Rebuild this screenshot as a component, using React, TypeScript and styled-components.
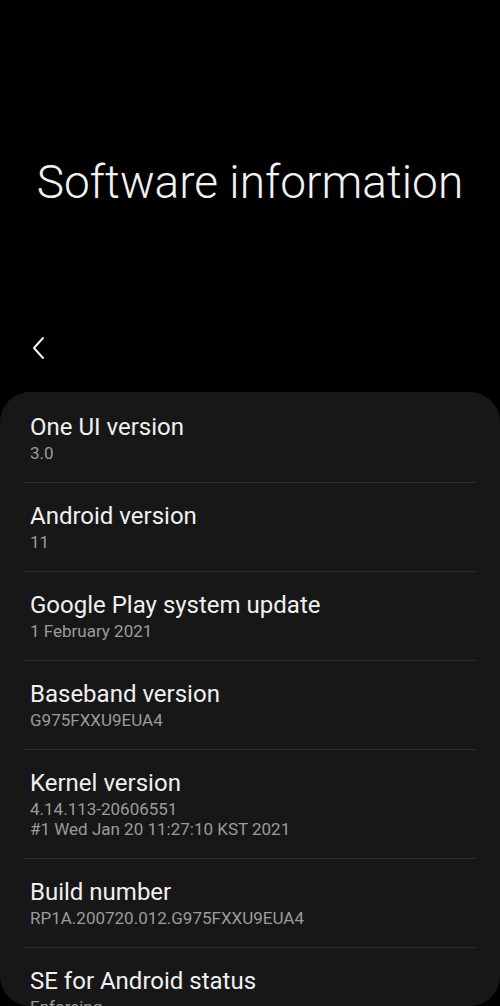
import React from "react";
import styled, { createGlobalStyle } from "styled-components";

const GlobalStyle = createGlobalStyle`
  html, body {
    margin: 0;
    padding: 0;
    background: #000;
  }
  body {
    font-family: Roboto, "Noto Sans", sans-serif;
    -webkit-font-smoothing: antialiased;
  }
`;

const Screen = styled.div`
  width: 500px;
  height: 1006px;
  background: #000;
  display: flex;
  flex-direction: column;
  overflow: hidden;
`;

const Header = styled.div`
  height: 392px;
  box-sizing: border-box;
  padding-top: 154px;
  display: flex;
  flex-direction: column;
`;

const Title = styled.h1`
  margin: 0;
  text-align: center;
  font-weight: 300;
  font-size: 46px;
  line-height: 56px;
  color: #f2f2f2;
`;

const Toolbar = styled.div`
  margin-top: 121px;
  height: 34px;
  display: flex;
  align-items: center;
  padding-left: 26px;
`;

const BackButton = styled.button`
  width: 24px;
  height: 34px;
  padding: 0;
  border: none;
  background: none;
  display: flex;
  align-items: center;
  justify-content: center;
  cursor: pointer;
`;

const Card = styled.div`
  flex: 1;
  background: #171717;
  border-radius: 30px;
  padding: 2px 24px 0;
  overflow: hidden;
`;

const Row = styled.div<{ $last?: boolean }>`
  padding: 19px 6px;
  border-bottom: ${(p) => (p.$last ? "none" : "1px solid #2b2b2b")};
`;

const RowTitle = styled.div`
  font-size: 24px;
  line-height: 28px;
  color: #f0f0f0;
`;

const RowValue = styled.div`
  margin-top: 2px;
  font-size: 17px;
  line-height: 20px;
  color: #9b9b9b;

  & + & {
    margin-top: 0;
  }
`;

const items: { title: string; value: string[] }[] = [
  { title: "One UI version", value: ["3.0"] },
  { title: "Android version", value: ["11"] },
  { title: "Google Play system update", value: ["1 February 2021"] },
  { title: "Baseband version", value: ["G975FXXU9EUA4"] },
  {
    title: "Kernel version",
    value: ["4.14.113-20606551", "#1 Wed Jan 20 11:27:10 KST 2021"],
  },
  { title: "Build number", value: ["RP1A.200720.012.G975FXXU9EUA4"] },
  { title: "SE for Android status", value: ["Enforcing"] },
];

function App() {
  return (
    <>
      <GlobalStyle />
      <Screen>
        <Header>
          <Title>Software information</Title>
          <Toolbar>
            <BackButton aria-label="Back">
              <svg width="14" height="24" viewBox="0 0 14 24">
                <path
                  d="M12 2 L3 12 L12 22"
                  fill="none"
                  stroke="#f2f2f2"
                  strokeWidth="2"
                  strokeLinecap="round"
                  strokeLinejoin="round"
                />
              </svg>
            </BackButton>
          </Toolbar>
        </Header>
        <Card>
          {items.map((item, i) => (
            <Row key={item.title} $last={i === items.length - 1}>
              <RowTitle>{item.title}</RowTitle>
              {item.value.map((v) => (
                <RowValue key={v}>{v}</RowValue>
              ))}
            </Row>
          ))}
        </Card>
      </Screen>
    </>
  );
}

export default App;
